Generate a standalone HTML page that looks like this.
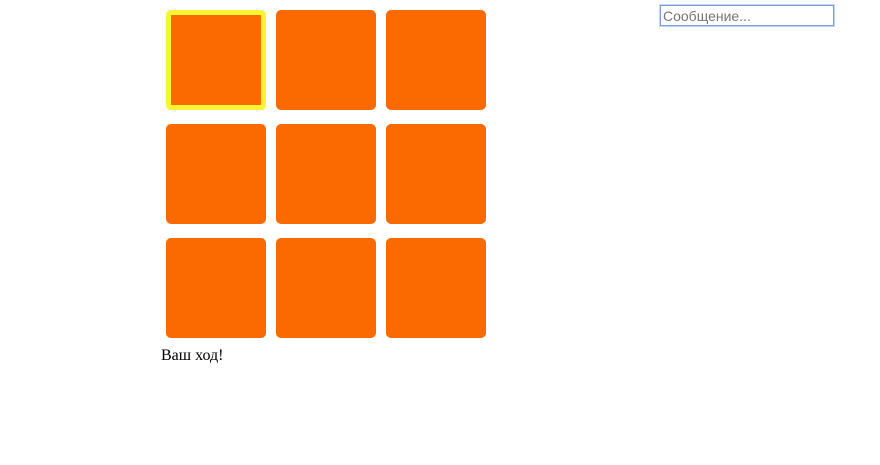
<!DOCTYPE html>
<html><head><meta charset="utf-8"><style>
body{margin:0;width:880px;height:465px;background:#fff;position:relative;font-family:"Liberation Serif","DejaVu Serif",serif;}
.t{position:absolute;width:100px;height:100px;background:#fb6a00;border-radius:5px;box-sizing:border-box;}
.sel{border:5px solid #f8f532;}
.in{position:absolute;left:660px;top:5px;width:174px;height:21px;box-sizing:border-box;border:1px solid #7b9cdb;outline:1px solid #c5d5f3;font:14px "Liberation Sans",sans-serif;color:#777;padding:2px 2px 0;line-height:17px;}
.msg{position:absolute;left:161px;top:347px;font-size:16px;}
</style></head><body>
<div class="t sel" style="left:166px;top:10px"></div>
<div class="t" style="left:276px;top:10px"></div>
<div class="t" style="left:386px;top:10px"></div>
<div class="t" style="left:166px;top:124px"></div>
<div class="t" style="left:276px;top:124px"></div>
<div class="t" style="left:386px;top:124px"></div>
<div class="t" style="left:166px;top:238px"></div>
<div class="t" style="left:276px;top:238px"></div>
<div class="t" style="left:386px;top:238px"></div>
<div class="msg">Ваш ход!</div>
<div class="in">Сообщение...</div>
</body></html>
